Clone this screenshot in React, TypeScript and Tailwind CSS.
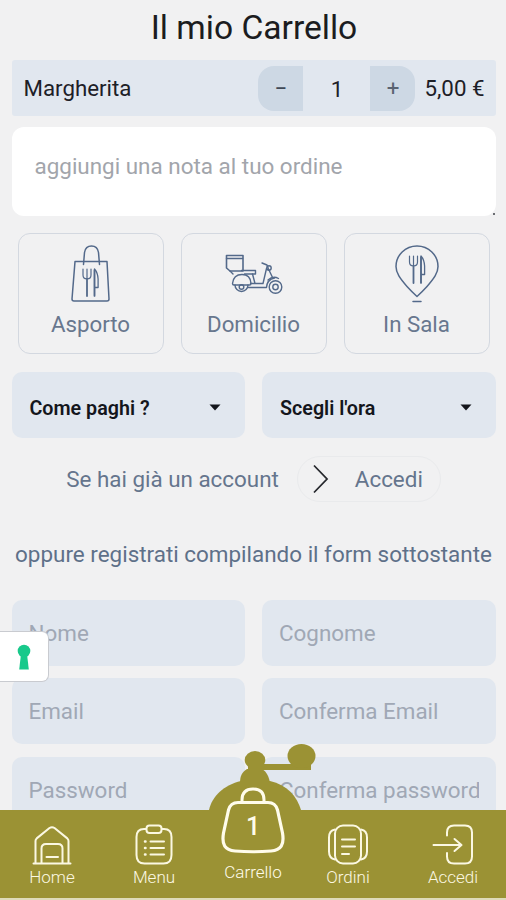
import React, { useState } from 'react';

type Mode = 'asporto' | 'domicilio' | 'sala';

// Fork and knife shared by the takeaway bag and the table pin
function Cutlery() {
  return (
    <g>
      <path d="M-7 -14v6q0 4 4 4t4 -4v-6M-3 -14v9" strokeWidth="1.2" />
      <path d="M-3 -4v17" strokeWidth="1.8" />
      <path d="M4.5 12.500v-26.500q3.200 3.500 3.600 10v8.500h-3" strokeWidth="1.3" />
      <path d="M4.5 -13v26" strokeWidth="1.700" />
    </g>
  );
}

function BagIcon() {
  return (
    <svg width="40" height="60" viewBox="0 0 40 60" fill="none" stroke="#53698a" strokeWidth="1.5" strokeLinecap="round" strokeLinejoin="round">
      <path d="M4 18.5h32l2 37.5q0 2 -2 2h-33q-2 0 -2 -2z" />
      <path d="M12.5 21.5l1 -12q1 -6.5 7 -6.5t7 6.5l1 12" />
      <g transform="translate(19 40)">
        <Cutlery />
      </g>
    </svg>
  );
}

function ScooterIcon() {
  return (
    <svg width="60" height="60" viewBox="0 0 60 60" fill="none" stroke="#53698a" strokeWidth="1.4" strokeLinecap="round" strokeLinejoin="round">
      <g transform="translate(-1 2)">
        <path d="M3.500 10.500h16.500v15.500h-13l-3.500 -3z" strokeWidth="1.6" />
        <path d="M3.500 13.500h16M7 26l3 3" />
        <path d="M18.500 25.500h14v3.500h-11" />
        <path d="M9.500 38.500q1 -9 9.500 -9t9 9q0 1.500 -1.500 1.500h-15.500q-1.500 0 -1.500 -1.500z" />
        <path d="M12 40a6.500 6.500 0 1 0 13 0" />
        <circle cx="18.500" cy="42" r="2.300" />
        <path d="M25.500 42.500h18q.5 -8 8 -9.500M27.500 38.500h12.500l3.500 -15M29.500 29l2.500 9.500M39 18l5 2 1.500 4 4.500 9.500" />
        <circle cx="46" cy="23" r="2.200" />
        <path d="M45 35q5 -4.500 10.500 -1.500" />
        <circle cx="52.500" cy="42" r="6.300" />
        <circle cx="52.500" cy="42" r="2.700" />
      </g>
    </svg>
  );
}

function PinIcon() {
  return (
    <svg width="46" height="60" viewBox="0 0 46 60" fill="none" stroke="#53698a" strokeWidth="1.5" strokeLinecap="round" strokeLinejoin="round">
      <path d="M23 53.500q-5 -4.500 -10 -10c-7 -8 -11 -13.500 -11 -20a21 20.500 0 0 1 42 0c0 6.500 -4 12 -11 20q-5 5.500 -10 10z" />
      <path d="M19 58.500h8" />
      <g transform="translate(22.500 27)">
        <Cutlery />
      </g>
    </svg>
  );
}

const modes: { id: Mode; label: string; icon: React.ReactNode }[] = [
  { id: 'asporto', label: 'Asporto', icon: <BagIcon /> },
  { id: 'domicilio', label: 'Domicilio', icon: <ScooterIcon /> },
  { id: 'sala', label: 'In Sala', icon: <PinIcon /> },
];

const fields = ['Nome', 'Cognome', 'Email', 'Conferma Email', 'Password', 'Conferma password'];

function SelectBox({ label }: { label: string }) {
  return (
    <button className="flex h-[66px] items-center justify-between rounded-[10px] bg-[#e1e7ef] pt-[8px] pr-6 pl-[18px] text-[19.7px] font-semibold text-[#14161c]">
      <span>{label}</span>
      <svg width="12" height="7" viewBox="0 0 12 7" className="mb-1">
        <path d="M0.500 0.500h11l-5.500 6z" fill="#14161c" />
      </svg>
    </button>
  );
}

function NavItem({ label, className, children }: { label: string; className: string; children: React.ReactNode }) {
  return (
    <button className={`flex w-[60px] flex-col items-center text-[17px] leading-5 font-light text-[#fbf8e2] ${className}`}>
      <svg width="44" height="44" viewBox="0 0 44 44" fill="none" stroke="#fbf8e2" strokeWidth="2" strokeLinecap="round" strokeLinejoin="round">
        {children}
      </svg>
      <span>{label}</span>
    </button>
  );
}

function BottomNav({ count }: { count: number }) {
  return (
    <nav className="absolute inset-x-0 bottom-0 h-[90px] border-b-2 border-[#dedbb9] bg-[#9b9234]">
      {/* Coffee grinder shape that rises above the bar */}
      <svg className="absolute bottom-[86px] left-[205px]" width="115" height="70" viewBox="0 0 115 70" fill="#9b9234">
        <path d="M4 70v-2c3 -14 15 -25 32 -29h29c17 4 27 15 31 29v2z" />
        <path d="M35 41c0 -7 2 -11 7 -14h15c5 3 7 8 8 14z" />
        <ellipse cx="50" cy="18" rx="10.300" ry="9" />
        <path d="M43 22h14v7h-14z" />
        <path d="M56 22h50v6h-50z" />
        <ellipse cx="96.500" cy="14" rx="14" ry="12" />
      </svg>
      <div className="relative flex h-full">
        <NavItem label="Home" className="ml-[22px] mt-[13px]">
          <path d="M5.500 40.500v-22.500q0 -1.500 1.200 -2.600l12.800 -10.400q2.500 -1.700 5 0l12.800 10.400q1.200 1.100 1.200 2.600v22.500M3.500 40.500h37" />
          <path d="M11.500 40v-14.500q0 -4.500 4.500 -4.500h12q4.500 0 4.500 4.500v14.500M16.500 34h11.500" />
        </NavItem>
        <NavItem label="Menu" className="ml-[42px] mt-[13px]">
          <path d="M14 6h-2q-7.500 0 -7.500 8v18q0 8.500 8 8.500h19q8 0 8 -8.500v-18q0 -8 -7.500 -8h-2" />
          <rect x="14.500" y="2.500" width="15" height="7.500" rx="3" />
          <path d="M18.500 18.500h13.500M18.500 25h13.500M18.500 31.500h13.500" />
          <path d="M13 18.500h.5M13 25h.5M13 31.500h.5" strokeWidth="2.500" />
        </NavItem>
        <button className="ml-[29px] flex w-[80px] flex-col items-center text-[#fffceb]">
          <span className="-mt-[24px] grid h-[70px] w-[66px] place-items-center">
            <svg className="col-start-1 row-start-1" width="66" height="70" viewBox="0 0 66 70" fill="none" stroke="#fffceb" strokeWidth="3.200" strokeLinejoin="round">
              <path d="M18 16.500h30q7.500 0 9.500 7.500l5 23c2 12 -1.500 17 -11.500 18q-18 1.500 -36 0c-10 -1 -13.500 -6 -11.500 -18l5 -23q2 -7.500 9.500 -7.500z" />
              <path d="M22 16v-2q0 -11 11 -11t11 11v2" strokeWidth="3" />
            </svg>
            <span className="col-start-1 row-start-1 pt-[11px] text-[25px] leading-none font-medium">{count}</span>
          </span>
          <span className="mt-[6px] text-[17px] leading-5 font-light">Carrello</span>
        </button>
        <NavItem label="Ordini" className="ml-[25px] mt-[13px]">
          <rect x="9" y="2.500" width="26" height="38" rx="8" />
          <path d="M9 6.500q-6 1 -6 8v14q0 7 6 8M35 6.500q6 1 6 8v14q0 7 -6 8M16 16.500h13M16 23.500h13M16 31h7" />
        </NavItem>
        <NavItem label="Accedi" className="ml-[45px] mt-[13px]">
          <path d="M16 12.500v-3q0 -7 7 -7h11q7 0 7 7v24q0 7 -7 7h-11q-7 0 -7 -7v-3.500M2.500 22h27M23.500 16l7 6 -7 6" />
        </NavItem>
      </div>
    </nav>
  );
}

export default function App() {
  const [quantity, setQuantity] = useState(1);
  const [mode, setMode] = useState<Mode | null>(null);

  return (
    <div className="relative h-[900px] w-[506px] overflow-hidden bg-[#f1f1f2] font-['Roboto',sans-serif]">
      <h1 className="h-[60px] pt-[8px] pl-[2px] text-center text-[33.6px] leading-[40px] text-[#1b1c20]">Il mio Carrello</h1>

      <main className="flex flex-col pr-[10.5px] pl-[11.5px]">
        {/* Order line */}
        <div className="flex h-14 items-center rounded-[3px] bg-[#e1e7ef] pr-[11px] pl-3 text-[22.3px] text-[#1d2027]">
          <span className="flex-1 pt-px">Margherita</span>
          <div className="flex h-[45px] w-[157px] text-center">
            <button onClick={() => setQuantity(q => Math.max(0, q - 1))} className="w-[45px] rounded-l-[16px] bg-[#cdd8e4] pt-px text-[#3f4856]">−</button>
            <span className="flex-1 leading-[46px]">{quantity}</span>
            <button onClick={() => setQuantity(q => q + 1)} className="w-[45px] rounded-r-[16px] bg-[#cdd8e4] pt-px text-[#5a6371]">+</button>
          </div>
          <span className="ml-[9px] pt-px">5,00 €</span>
        </div>

        <div className="relative mt-[11px] h-[89px]">
          <textarea
            placeholder="aggiungi una nota al tuo ordine"
            className="block h-full w-full resize-none rounded-[12px] bg-white px-[23px] pt-[23px] text-[22.45px] text-[#53698a] outline-none placeholder:text-[#a2a5ab]"
          />
          {/* Resize grip */}
          <span className="absolute right-[1px] bottom-[1px] size-[2px] bg-[#6b6d72]" />
        </div>

        {/* Delivery mode */}
        <div className="mt-[17px] grid grid-cols-3 gap-[17px] px-[6px]">
          {modes.map(item => (
            <button
              key={item.id}
              onClick={() => setMode(item.id)}
              className={`flex h-[121px] flex-col items-center rounded-[12px] border-[1.5px] pt-[9px] text-[22.3px] text-[#68778e] ${mode === item.id ? 'border-[#53698a]' : 'border-[#d3d8e0]'}`}
            >
              {item.icon}
              <span className="mt-[7px] leading-7">{item.label}</span>
            </button>
          ))}
        </div>

        <div className="mt-[18px] grid grid-cols-2 gap-[17px]">
          <SelectBox label="Come paghi ?" />
          <SelectBox label="Scegli l'ora" />
        </div>

        {/* Login */}
        <div className="mt-[18px] flex h-[46px] items-center justify-center text-[22.4px] text-[#65758d]">
          <span className="pt-px">Se hai già un account</span>
          <button className="ml-[18px] flex h-[46px] w-[144px] items-center rounded-full border border-[#e9eaec] pl-[15px]">
            <svg width="16" height="30" viewBox="0 0 16 30" fill="none" stroke="#26282d" strokeWidth="1.800">
              <path d="M1 1.500l13 13.500 -13 13.500" />
            </svg>
            <span className="ml-[26px] pt-px">Accedi</span>
          </button>
        </div>
        <p className="mt-[36.5px] flex justify-center text-[22.450px] leading-[30px] whitespace-nowrap text-[#5e7089]">
          oppure registrati compilando il form sottostante
        </p>

        <form className="mt-[31px] grid grid-cols-2 gap-x-[17px] gap-y-[12.500px]">
          {fields.map(field => (
            <input
              key={field}
              type={field.toLowerCase().includes('password') ? 'password' : 'text'}
              placeholder={field}
              className="h-[66px] w-full min-w-0 rounded-[10px] bg-[#e1e7ef] px-[17px] text-[22.4px] outline-none placeholder:text-[#a0a8b5]"
            />
          ))}
        </form>
      </main>

      {/* Privacy preferences tab */}
      <button className="absolute top-[631px] left-0 flex h-[51px] w-[49px] items-center justify-center rounded-r-[7px] border border-l-0 border-[#c9cbd0] bg-white">
        <svg width="14" height="26" viewBox="0 0 14 26" fill="#18c98b">
          <circle cx="7" cy="7" r="6.300" />
          <path d="M4 10h6l1.800 15.500h-9.600z" />
        </svg>
      </button>

      <BottomNav count={quantity} />
    </div>
  );
}
